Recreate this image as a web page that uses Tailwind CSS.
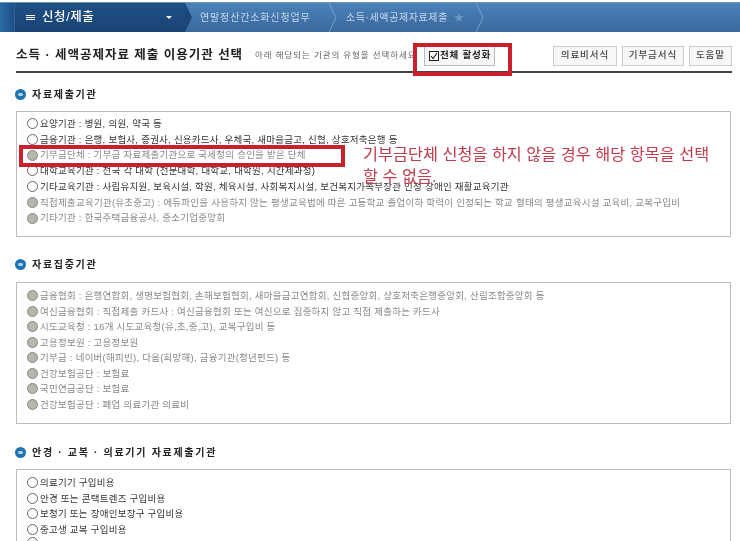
<!DOCTYPE html>
<html lang="ko">
<head>
  <meta charset="UTF-8" />
  <title>소득·세액공제자료 제출 이용기관 선택</title>
  <script src="https://cdn.jsdelivr.net/npm/@tailwindcss/browser@4"></script>
</head>
<body class="bg-white overflow-hidden">
  <div class="relative w-[740px] h-[541px] overflow-hidden bg-white text-[#333] font-['Liberation_Sans','Noto_Sans_CJK_KR',sans-serif] blur-[0.4px]">

    <!-- top nav -->
    <div class="pt-[2px]">
      <div class="flex h-[30px] border-t border-[#6f98b0] bg-gradient-to-b from-[#4b82ba] to-[#3a689c] text-[#c4d8ec] text-[10px] tracking-[0.85px]">
        <div class="relative w-[185px] shrink-0 flex bg-gradient-to-b from-[#1f4f86] to-[#1a4474] text-white">
          <div class="w-[15px] shrink-0 border-r border-[#2f6396] bg-gradient-to-r from-[#2a6ba6] to-[#1f4f86]"></div>
          <div class="flex-1 flex items-center pl-[11px]">
            <span class="flex flex-col gap-[1px] w-[9px] mr-[7px]">
              <span class="h-[1px] bg-white"></span>
              <span class="h-[1px] bg-white"></span>
              <span class="h-[1px] bg-white"></span>
            </span>
            <span class="text-[12.5px] font-medium tracking-[0.6px]">신청/제출</span>
            <span class="ml-auto mr-[13px] w-0 h-0 border-x-[3px] border-x-transparent border-t-[3px] border-t-white"></span>
          </div>
          <svg class="absolute left-full top-0" width="8" height="29"><path d="M0 0 L7 14.5 L0 29 Z" fill="#1c4678" /></svg>
        </div>
        <div class="relative w-[146px] shrink-0 flex items-center pl-[15px]">
          연말정산간소화신청업무
          <svg class="absolute right-[-6px] top-0" width="8" height="29"><path d="M0 0 L7 14.5 L0 29" fill="none" stroke="#74a2cf" /></svg>
        </div>
        <div class="relative w-[147px] shrink-0 flex items-center pl-[15px] tracking-[0.6px]">
          소득·세액공제자료제출
          <span class="ml-[6px] text-[#6c9ac8] text-[10px]">★</span>
          <svg class="absolute right-[-6px] top-0" width="8" height="29"><path d="M0 0 L7 14.5 L0 29" fill="none" stroke="#74a2cf" /></svg>
        </div>
      </div>
    </div>

    <!-- title row -->
    <div class="ml-[16px] mr-[8px] mt-[10px] h-[31px] flex items-center border-b-2 border-[#444] pb-[2px]">
      <h1 class="text-[12.5px] font-bold text-[#222] tracking-[0.98px]">소득 · 세액공제자료 제출 이용기관 선택</h1>
      <span class="ml-[12px] w-[167px] shrink-0 whitespace-nowrap overflow-hidden text-[8.5px] text-[#666] tracking-[0.9px]">아래 해당되는 기관의 유형을 선택하세요</span>
      <button class="ml-[2px] w-[71px] h-[20px] shrink-0 flex items-center border border-[#b4bcc8] bg-[#f6f6f6] pl-[4px] text-[9.5px] font-bold text-[#222] tracking-[0.75px]">
        <svg class="mr-[1px]" width="10" height="10" viewBox="0 0 10 10"><rect x="0.5" y="0.5" width="9" height="9" fill="#fff" stroke="#222" /><path d="M2 5 L4 7.5 L8 2" fill="none" stroke="#222" stroke-width="1.2" /></svg>
        전체 활성화
      </button>
      <div class="ml-auto flex gap-[5px] text-[9.5px] font-medium text-[#444] tracking-[1px]">
        <button class="w-[64px] h-[20px] border border-[#ccc] bg-[#f7f7f7]">의료비서식</button>
        <button class="w-[62px] h-[20px] border border-[#ccc] bg-[#f7f7f7]">기부금서식</button>
        <button class="w-[43px] h-[20px] border border-[#ccc] bg-[#f7f7f7]">도움말</button>
      </div>
    </div>

    <!-- 자료제출기관 -->
    <div class="mt-[13px] ml-[15px] h-[16px] flex items-center gap-[6px] text-[10px] font-bold text-[#222] tracking-[1.7px]">
      <span class="w-[11px] h-[11px] rounded-full bg-[#1f74b0] flex items-center justify-center"><span class="w-[5px] h-[3px] rounded-full bg-[#a9d2ee]"></span></span>
      자료제출기관
    </div>
    <div class="mt-[9px] mx-[16px] w-[715px] h-[126px] border border-[#bdbdbd] pt-[4px] pl-[10px] text-[9.5px] leading-[15.7px] whitespace-nowrap tracking-[0.25px]">
      <div class="flex items-center gap-[2px] text-[#333]"><span class="w-[11px] h-[11px] rounded-full border border-[#666] bg-white"></span>요양기관 : 병원, 의원, 약국 등</div>
      <div class="flex items-center gap-[2px] text-[#333]"><span class="w-[11px] h-[11px] rounded-full border border-[#666] bg-white"></span>금융기관 : 은행, 보험사, 증권사, 신용카드사, 우체국, 새마을금고, 신협, 상호저축은행 등</div>
      <div class="flex items-center gap-[2px] text-[#888]"><span class="w-[11px] h-[11px] rounded-full border border-[#888] bg-[#b8b6aa]"></span>기부금단체 : 기부금 자료제출기관으로 국세청의 승인을 받은 단체</div>
      <div class="flex items-center gap-[2px] text-[#333]"><span class="w-[11px] h-[11px] rounded-full border border-[#666] bg-white"></span>대학교육기관 : 전국 각 대학 (전문대학, 대학교, 대학원, 시간제과정)</div>
      <div class="flex items-center gap-[2px] text-[#333]"><span class="w-[11px] h-[11px] rounded-full border border-[#666] bg-white"></span>기타교육기관 : 사립유치원, 보육시설, 학원, 체육시설, 사회복지시설, 보건복지가족부장관 인정 장애인 재활교육기관</div>
      <div class="flex items-center gap-[2px] text-[#888]"><span class="w-[11px] h-[11px] rounded-full border border-[#888] bg-[#b8b6aa]"></span>직접제출교육기관(유초중고) : 에듀파인을 사용하지 않는 평생교육법에 따른 고등학교 졸업이하 학력이 인정되는 학교 형태의 평생교육시설 교육비, 교복구입비</div>
      <div class="flex items-center gap-[2px] text-[#888]"><span class="w-[11px] h-[11px] rounded-full border border-[#888] bg-[#b8b6aa]"></span>기타기관 : 한국주택금융공사, 중소기업중앙회</div>
    </div>

    <!-- 자료집중기관 -->
    <div class="mt-[19px] ml-[15px] h-[16px] flex items-center gap-[6px] text-[10px] font-bold text-[#222] tracking-[1.7px]">
      <span class="w-[11px] h-[11px] rounded-full bg-[#1f74b0] flex items-center justify-center"><span class="w-[5px] h-[3px] rounded-full bg-[#a9d2ee]"></span></span>
      자료집중기관
    </div>
    <div class="mt-[10px] mx-[16px] w-[715px] h-[142px] border border-[#bdbdbd] pt-[5px] pl-[10px] text-[9.5px] leading-[15.5px] whitespace-nowrap text-[#888] tracking-[0.25px]">
      <div class="flex items-center gap-[2px]"><span class="w-[11px] h-[11px] rounded-full border border-[#888] bg-[#b8b6aa]"></span>금융협회 : 은행연합회, 생명보험협회, 손해보험협회, 새마을금고연합회, 신협중앙회, 상호저축은행중앙회, 산림조합중앙회 등</div>
      <div class="flex items-center gap-[2px]"><span class="w-[11px] h-[11px] rounded-full border border-[#888] bg-[#b8b6aa]"></span>여신금융협회 : 직접제출 카드사 : 여신금융협회 또는 여신으로 집중하지 않고 직접 제출하는 카드사</div>
      <div class="flex items-center gap-[2px]"><span class="w-[11px] h-[11px] rounded-full border border-[#888] bg-[#b8b6aa]"></span>시도교육청 : 16개 시도교육청(유,초,중,고), 교복구입비 등</div>
      <div class="flex items-center gap-[2px]"><span class="w-[11px] h-[11px] rounded-full border border-[#888] bg-[#b8b6aa]"></span>고용정보원 : 고용정보원</div>
      <div class="flex items-center gap-[2px]"><span class="w-[11px] h-[11px] rounded-full border border-[#888] bg-[#b8b6aa]"></span>기부금 : 네이버(해피빈), 다음(희망해), 금융기관(청년펀드) 등</div>
      <div class="flex items-center gap-[2px]"><span class="w-[11px] h-[11px] rounded-full border border-[#888] bg-[#b8b6aa]"></span>건강보험공단 : 보험료</div>
      <div class="flex items-center gap-[2px]"><span class="w-[11px] h-[11px] rounded-full border border-[#888] bg-[#b8b6aa]"></span>국민연금공단 : 보험료</div>
      <div class="flex items-center gap-[2px]"><span class="w-[11px] h-[11px] rounded-full border border-[#888] bg-[#b8b6aa]"></span>건강보험공단 : 폐업 의료기관 의료비</div>
    </div>

    <!-- 안경 교복 의료기기 -->
    <div class="mt-[20px] ml-[15px] h-[16px] flex items-center gap-[6px] text-[10px] font-bold text-[#222] tracking-[1.7px]">
      <span class="w-[11px] h-[11px] rounded-full bg-[#1f74b0] flex items-center justify-center"><span class="w-[5px] h-[3px] rounded-full bg-[#a9d2ee]"></span></span>
      안경 · 교복 · 의료기기 자료제출기관
    </div>
    <div class="mt-[9px] mx-[16px] w-[715px] h-[120px] border border-[#bdbdbd] pt-[5px] pl-[10px] text-[9.5px] leading-[15.6px] whitespace-nowrap text-[#333] tracking-[0.25px]">
      <div class="flex items-center gap-[2px]"><span class="w-[11px] h-[11px] rounded-full border border-[#666] bg-white"></span>의료기기 구입비용</div>
      <div class="flex items-center gap-[2px]"><span class="w-[11px] h-[11px] rounded-full border border-[#666] bg-white"></span>안경 또는 콘택트렌즈 구입비용</div>
      <div class="flex items-center gap-[2px]"><span class="w-[11px] h-[11px] rounded-full border border-[#666] bg-white"></span>보청기 또는 장애인보장구 구입비용</div>
      <div class="flex items-center gap-[2px]"><span class="w-[11px] h-[11px] rounded-full border border-[#666] bg-white"></span>중고생 교복 구입비용</div>
      <div class="flex items-center gap-[2px]"><span class="w-[11px] h-[11px] rounded-full border border-[#666] bg-white"></span></div>
    </div>

    <!-- red annotations over the capture -->
    <div class="absolute left-[413px] top-[43px] w-[99px] h-[33px] border-[4px] border-[#c9202c]"></div>
    <div class="absolute left-[19px] top-[145px] w-[326px] h-[22px] border-[4px] border-[#c9202c]"></div>
    <p class="absolute left-[363px] top-[143px] w-[360px] text-[16.3px] leading-[22px] text-[#c23b4b]">기부금단체 신청을 하지 않을 경우 해당 항목을 선택<br />할 수 없음.</p>
  </div>
</body>
</html>
